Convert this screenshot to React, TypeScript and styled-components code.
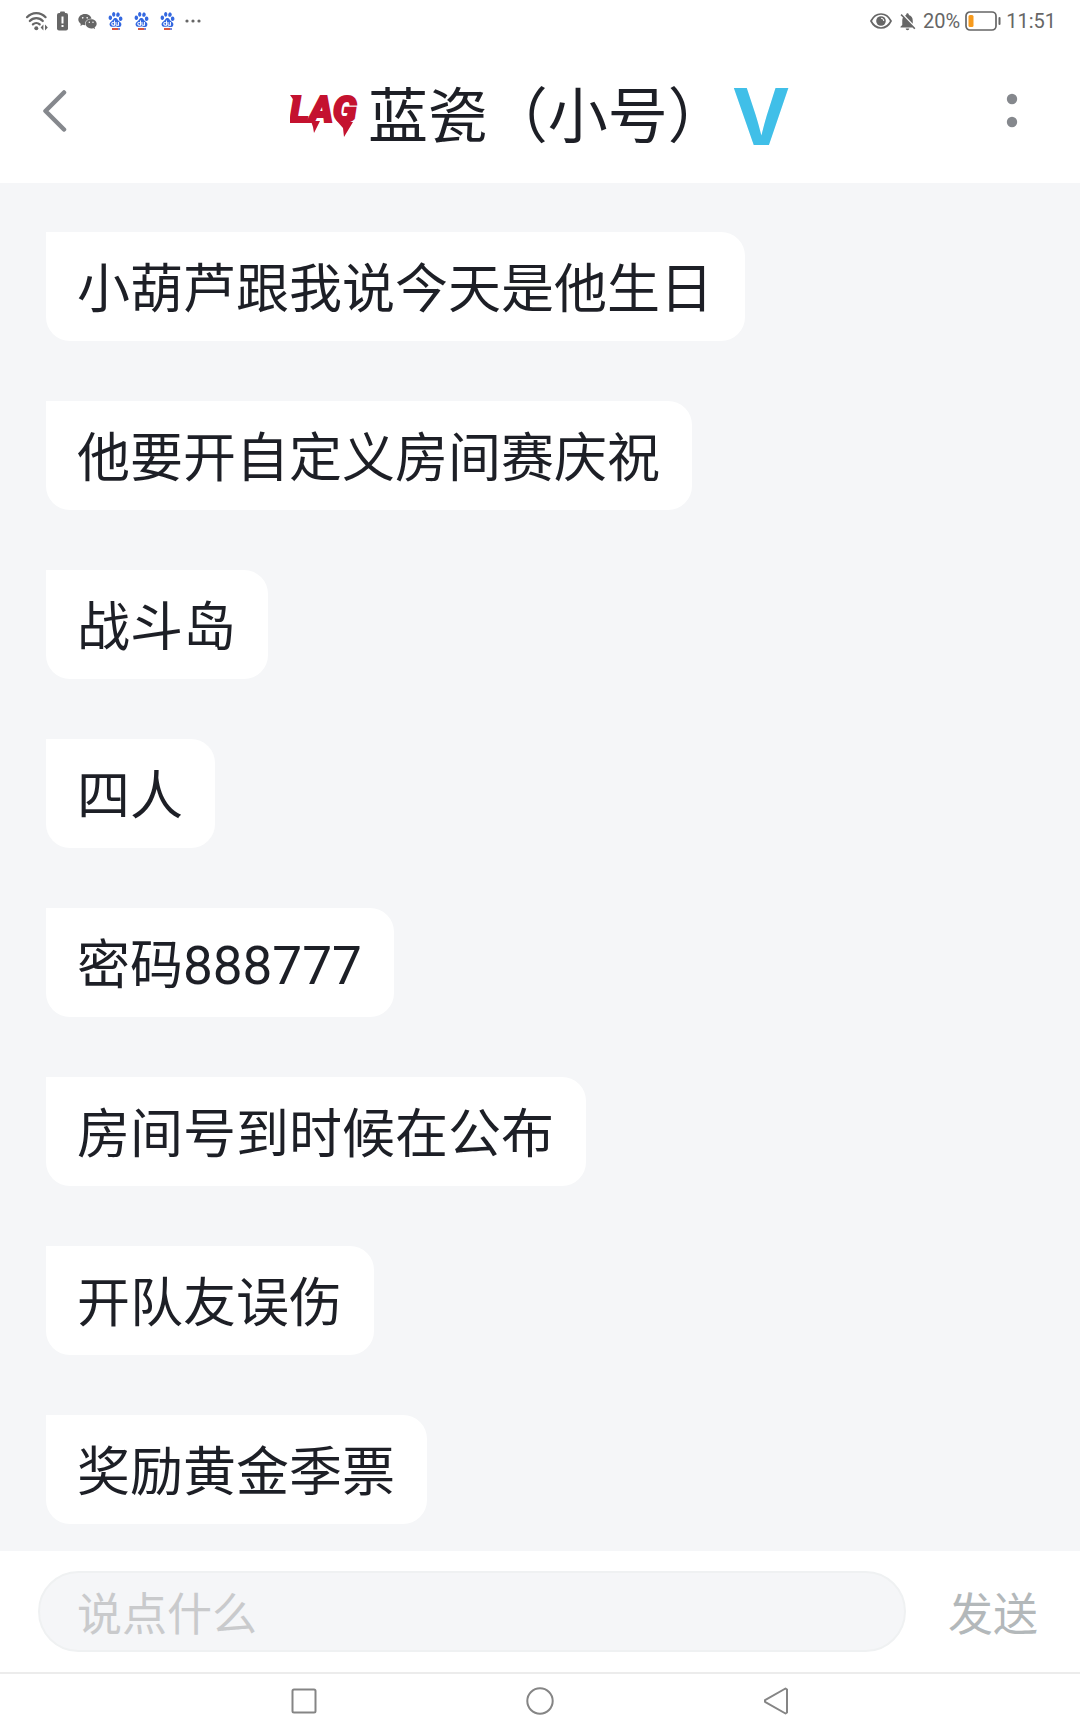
import React, { useState } from "react";
import styled, { createGlobalStyle } from "styled-components";
import { MdNotificationsOff } from "react-icons/md";
import { AiFillWechat } from "react-icons/ai";
import { SiBaidu } from "react-icons/si";

const cjk = '"Noto Sans CJK SC", "Noto Sans", sans-serif';

const GlobalStyle = createGlobalStyle`
  *, *::before, *::after { box-sizing: border-box; }
  body { margin: 0; background: #ffffff; font-family: ${cjk}; color: #1d1f26; }
  button, input { font: inherit; margin: 0; padding: 0; border: 0; background: none; }
`;

const Screen = styled.div`
  display: flex;
  flex-direction: column;
  min-height: 100vh;
  background: #ffffff;
`;

const StatusBar = styled.div`
  display: flex;
  align-items: center;
  justify-content: space-between;
  height: 40px;
  padding: 2px 24px 0;
  font-family: Roboto, sans-serif;
  font-size: 20px;
  line-height: 24px;
  color: #666666;
`;

const StatusGroup = styled.div<{ $gap: number }>`
  display: flex;
  align-items: center;
  gap: ${(p) => p.$gap}px;

  svg { display: block; flex: none; }
`;

const BaiduMark = styled.span`
  display: flex;
  flex-direction: column;
  align-items: center;
  gap: 1px;
  width: 17px;
  color: #3468e0;

  &::after {
    content: "";
    width: 8px;
    height: 2px;
    background: linear-gradient(90deg, #d8543e 70%, #7a86d8 70%);
  }
`;

const Header = styled.header`
  display: grid;
  grid-template-columns: 1fr auto 1fr;
  align-items: center;
  height: 143px;
  padding: 0 32px;
`;

const IconButton = styled.button<{ $end?: boolean }>`
  display: flex;
  align-items: center;
  justify-content: center;
  justify-self: ${(p) => (p.$end ? "end" : "start")};
  width: ${(p) => (p.$end ? 72 : 48)}px;
  height: 48px;
  color: #85888d;
  cursor: pointer;

  svg { display: block; }
`;

const TitleGroup = styled.div`
  display: flex;
  align-items: center;
  gap: 4px;

  svg { display: block; }
`;

const Title = styled.h1`
  margin: 0;
  font-size: 60px;
  line-height: 80px;
  font-weight: 400;
  white-space: nowrap;
`;

const VipBadge = styled.span`
  padding-top: 10px;
  font-family: Inter, sans-serif;
  font-size: 78px;
  line-height: 80px;
  font-weight: 700;
  color: #40bfe8;
`;

const Chat = styled.main`
  flex: 1;
  padding: 49px 46px 25px;
  background: #f5f6f8;
`;

const MessageList = styled.ul`
  display: flex;
  flex-direction: column;
  align-items: flex-start;
  gap: 60px;
  margin: 0;
  padding: 0;
  list-style: none;
`;

const Bubble = styled.li`
  padding: 20px 32px 13px 31px;
  border-radius: 0 24px 24px 24px;
  background: #ffffff;
  font-family: Roboto, ${cjk};
  font-size: 53px;
  line-height: 76px;
`;

const Composer = styled.form`
  display: flex;
  align-items: center;
  gap: 42px;
  padding: 20px 42px 20px 38px;
  background: #ffffff;
`;

const MessageInput = styled.input`
  flex: 1;
  min-width: 0;
  height: 81px;

  && {
    padding: 0 37px;
    border: 2px solid #eff1f2;
    border-radius: 41px;
    background: #f5f6f8;
    font-size: 45px;
    line-height: 64px;
    outline: none;
  }
  &::placeholder { color: #c9cacc; opacity: 1; }
`;

const SendButton = styled.button`
  && {
    font-size: 45px;
    line-height: 64px;
  }
  color: #b3b8ba;
  cursor: pointer;
`;

const NavBar = styled.nav`
  display: flex;
  align-items: center;
  justify-content: center;
  gap: 188px;
  height: 56px;
  border-top: 2px solid #ececec;
`;

const messages = [
  "小葫芦跟我说今天是他生日",
  "他要开自定义房间赛庆祝",
  "战斗岛",
  "四人",
  "密码888777",
  "房间号到时候在公布",
  "开队友误伤",
  "奖励黄金季票",
];

const WifiIcon = () => (
  <svg width="24" height="22" viewBox="0 0 24 22" fill="none" stroke="currentColor" strokeWidth="2.2" strokeLinecap="round">
    <path d="M3 7.2a12.5 12.5 0 0 1 18.6 0M5.8 11a8.8 8.8 0 0 1 13 0M8.9 14.4a5 5 0 0 1 6.8 0" />
    <circle cx="12.3" cy="18.2" r="2" fill="currentColor" stroke="none" />
    <path d="M19.4 14.6v5.8l-2.8-2.9zM21 14.6v5.8l2.8-2.9z" fill="currentColor" stroke="none" />
  </svg>
);

const BatteryAlertIcon = () => (
  <svg width="11" height="20" viewBox="0 0 11 20">
    <rect x="3" y="0.5" width="5" height="3" rx="1" fill="currentColor" />
    <rect x="0" y="2" width="11" height="17.5" rx="2" fill="currentColor" />
    <rect x="4.5" y="5.5" width="2" height="7" fill="#ffffff" />
    <rect x="4.5" y="14" width="2" height="2" fill="#ffffff" />
  </svg>
);

const MoreDots = () => (
  <svg width="16" height="4" viewBox="0 0 16 4" fill="currentColor">
    <circle cx="2" cy="2" r="1.6" />
    <circle cx="8" cy="2" r="1.6" />
    <circle cx="14" cy="2" r="1.6" />
  </svg>
);

const EyeIcon = () => (
  <svg width="22" height="18" viewBox="0 0 22 18" fill="none" stroke="currentColor" strokeWidth="1.7">
    <path d="M1 9C3.2 4.6 6.8 2 11 2s7.8 2.6 10 7c-2.2 4.4-5.8 7-10 7S3.2 13.4 1 9Z" />
    <circle cx="11" cy="9" r="4.8" fill="currentColor" stroke="none" />
    <path d="M11 6.2a2.8 2.8 0 0 1 2.8 2.8" stroke="#fff" strokeWidth="1" />
  </svg>
);

const BatteryIcon = () => (
  <svg width="36" height="20" viewBox="0 0 36 20">
    <rect x="1" y="1" width="30" height="18" rx="4" fill="none" stroke="#666666" strokeWidth="1.7" />
    <rect x="3.5" y="4" width="5" height="12" rx="1.5" fill="#f79a1c" />
    <rect x="33.5" y="6" width="2" height="8" rx="1" fill="#666666" />
  </svg>
);

const TeamLogo = () => (
  <svg width="74" height="72" viewBox="0 0 74 72" role="img" aria-label="LAG" fill="#c4122f">
    <text
      x="0"
      y="46"
      fontFamily="Roboto, sans-serif"
      fontSize="36"
      fontWeight="900"
      fontStyle="italic"
      stroke="#c4122f"
      strokeWidth="2"
    >
      LAG
    </text>
    <path d="M0 19h9l-1 7H5zM21 45h9l-6 12-1-6zM46 44l8 2h9L54 61l-1-9z" />
  </svg>
);

export default function App() {
  const [draft, setDraft] = useState("");

  return (
    <>
      <GlobalStyle />
      <Screen>
        <StatusBar>
          <StatusGroup $gap={9}>
            <WifiIcon />
            <BatteryAlertIcon />
            <AiFillWechat size={21} />
            <BaiduMark><SiBaidu size={15} /></BaiduMark>
            <BaiduMark><SiBaidu size={15} /></BaiduMark>
            <BaiduMark><SiBaidu size={15} /></BaiduMark>
            <MoreDots />
          </StatusGroup>
          <StatusGroup $gap={5}>
            <EyeIcon />
            <MdNotificationsOff size={21} />
            <span>20%</span>
            <BatteryIcon />
            <time>11:51</time>
          </StatusGroup>
        </StatusBar>

        <Header>
          <IconButton type="button" aria-label="返回">
            <svg width="28" height="44" viewBox="0 0 28 44" fill="none" stroke="currentColor" strokeWidth="4.5" strokeLinecap="round" strokeLinejoin="round">
              <path d="M22 2.5 3.5 21 22 39.5" />
            </svg>
          </IconButton>
          <TitleGroup>
            <TeamLogo />
            <Title>蓝瓷（小号）</Title>
            <VipBadge>V</VipBadge>
          </TitleGroup>
          <IconButton type="button" aria-label="更多" $end>
            <svg width="12" height="38" viewBox="0 0 12 38" fill="currentColor">
              <circle cx="6" cy="6" r="5.2" />
              <circle cx="6" cy="29" r="5.2" />
            </svg>
          </IconButton>
        </Header>

        <Chat>
          <MessageList>
            {messages.map((text) => (
              <Bubble key={text}>{text}</Bubble>
            ))}
          </MessageList>
        </Chat>

        <Composer onSubmit={(e) => { e.preventDefault(); setDraft(""); }}>
          <MessageInput
            type="text"
            aria-label="说点什么"
            placeholder="说点什么"
            value={draft}
            onChange={(e) => setDraft(e.target.value)}
          />
          <SendButton type="submit">发送</SendButton>
        </Composer>

        <NavBar>
          <IconButton type="button" aria-label="最近任务">
            <svg width="26" height="26" viewBox="0 0 26 26" fill="none" stroke="#858585" strokeWidth="2">
              <rect x="1.5" y="1.5" width="23" height="23" rx="1.5" />
            </svg>
          </IconButton>
          <IconButton type="button" aria-label="主屏幕">
            <svg width="28" height="28" viewBox="0 0 28 28" fill="none" stroke="#858585" strokeWidth="2">
              <circle cx="14" cy="14" r="12.7" />
            </svg>
          </IconButton>
          <IconButton type="button" aria-label="后退">
            <svg width="26" height="28" viewBox="0 0 26 28" fill="none" stroke="#858585" strokeWidth="2" strokeLinejoin="round">
              <path d="M2 13.2v1.6l20.5 11.7 1.5-1V2.5l-1.5-1z" />
            </svg>
          </IconButton>
        </NavBar>
      </Screen>
    </>
  );
}
